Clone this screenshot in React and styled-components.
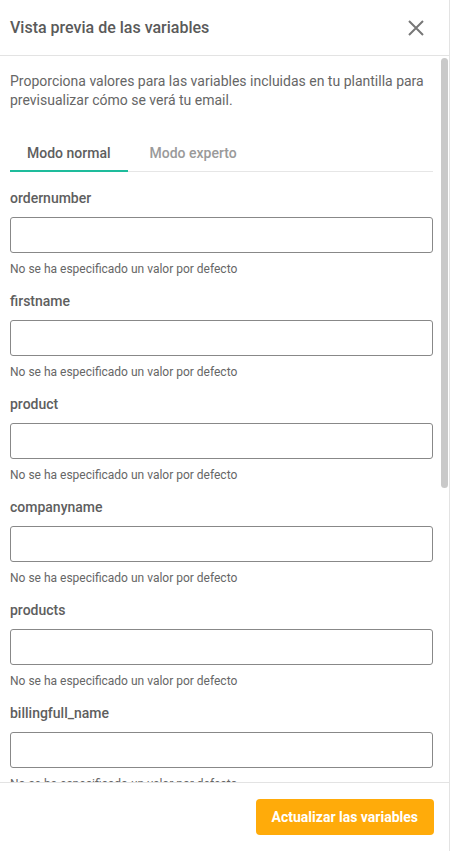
import { useEffect, useRef, useState } from "react";
import styled, { createGlobalStyle } from "styled-components";

const GlobalStyle = createGlobalStyle`
  html, body {
    margin: 0;
    padding: 0;
    background: #fff;
  }
  * {
    box-sizing: border-box;
  }
  body {
    font-family: Roboto, "Liberation Sans", Arial, sans-serif;
  }
`;

const Panel = styled.div`
  display: flex;
  flex-direction: column;
  width: 450px;
  height: 851px;
  border-right: 1px solid #e3e3e3;
  background: #fff;
`;

const Header = styled.div`
  display: flex;
  align-items: center;
  justify-content: space-between;
  height: 56px;
  flex-shrink: 0;
  padding: 0 25px 0 10px;
  border-bottom: 1px solid #e3e3e3;
`;

const Title = styled.h2`
  margin: 0;
  font-size: 16px;
  font-weight: 500;
  color: #5a5a5a;
`;

const CloseButton = styled.button`
  display: flex;
  padding: 0;
  border: none;
  background: none;
  cursor: pointer;
`;

const BodyRow = styled.div`
  display: flex;
  flex: 1;
  min-height: 0;
`;

const Body = styled.div`
  flex: 1;
  overflow-y: auto;
  padding: 16px 7px 72px 10px;
  scrollbar-width: none;

  &::-webkit-scrollbar {
    display: none;
  }
`;

const ScrollTrack = styled.div`
  width: 9px;
  flex-shrink: 0;
  padding: 2px 1px 2px 1px;
`;

const ScrollThumb = styled.div`
  width: 7px;
  border-radius: 4px;
  background: #c9c9c9;
`;

const Description = styled.p`
  margin: 0;
  font-size: 14px;
  line-height: 19px;
  color: #666;
`;

const TabList = styled.div`
  display: flex;
  gap: 5px;
  margin-top: 22px;
  border-bottom: 1px solid #e6e6e6;
`;

const Tab = styled.button`
  padding: 12px 17px 7px;
  margin-bottom: -1px;
  border: none;
  border-bottom: 2px solid ${(p) => (p.$active ? "#1ebc9c" : "transparent")};
  background: none;
  font-family: inherit;
  font-size: 14px;
  line-height: 19px;
  font-weight: 500;
  color: ${(p) => (p.$active ? "#5e5e5e" : "#9a9a9a")};
  cursor: pointer;
`;

const Fields = styled.div`
  display: flex;
  flex-direction: column;
  gap: 15px;
  padding-top: 17px;
`;

const Field = styled.div`
  display: flex;
  flex-direction: column;
`;

const Label = styled.label`
  font-size: 14px;
  line-height: 19px;
  font-weight: 500;
  color: #5e5e5e;
`;

const Input = styled.input`
  margin-top: 9px;
  width: 100%;
  height: 36px;
  padding: 0 10px;
  border: 1px solid #888;
  border-radius: 3px;
  font-family: inherit;
  font-size: 14px;
  color: #333;
  outline: none;
`;

const Hint = styled.span`
  margin-top: 8px;
  font-size: 12px;
  line-height: 16px;
  color: #666;
`;

const Footer = styled.div`
  display: flex;
  justify-content: flex-end;
  flex-shrink: 0;
  height: 69px;
  padding: 16px 15px 16px 0;
  border-top: 1px solid #e3e3e3;
`;

const SubmitButton = styled.button`
  height: 36px;
  padding: 0 16px;
  border: none;
  border-radius: 4px;
  background: #ffab0a;
  color: #fff;
  font-family: inherit;
  font-size: 14px;
  font-weight: 700;
  cursor: pointer;
`;

const variables = [
  "ordernumber",
  "firstname",
  "product",
  "companyname",
  "products",
  "billingfull_name",
  "billingaddress",
  "shippingaddress",
  "ordertotal",
  "orderdate",
];

function CloseIcon() {
  return (
    <svg width="16" height="16" viewBox="0 0 16 16">
      <path d="M1 1 L15 15 M15 1 L1 15" stroke="#777" strokeWidth="2" fill="none" />
    </svg>
  );
}

export default function App() {
  const [tab, setTab] = useState("normal");
  const [values, setValues] = useState({});
  const [thumb, setThumb] = useState({ top: 0, height: 0 });
  const bodyRef = useRef(null);

  const updateThumb = () => {
    const el = bodyRef.current;
    if (!el) return;
    const track = el.clientHeight - 4;
    const height = (el.clientHeight / el.scrollHeight) * track;
    const top = (el.scrollTop / el.scrollHeight) * track;
    setThumb({ top, height });
  };

  useEffect(() => {
    updateThumb();
    window.addEventListener("resize", updateThumb);
    return () => window.removeEventListener("resize", updateThumb);
  }, []);

  const handleChange = (e) => {
    const { name, value } = e.target;
    setValues((v) => ({ ...v, [name]: value }));
  };

  return (
    <>
      <GlobalStyle />
      <Panel>
        <Header>
          <Title>Vista previa de las variables</Title>
          <CloseButton aria-label="Cerrar">
            <CloseIcon />
          </CloseButton>
        </Header>
        <BodyRow>
          <Body ref={bodyRef} onScroll={updateThumb}>
            <Description>
              Proporciona valores para las variables incluidas en tu plantilla para
              previsualizar cómo se verá tu email.
            </Description>
            <TabList>
              <Tab $active={tab === "normal"} onClick={() => setTab("normal")}>
                Modo normal
              </Tab>
              <Tab $active={tab === "expert"} onClick={() => setTab("expert")}>
                Modo experto
              </Tab>
            </TabList>
            <Fields>
              {variables.map((name) => (
                <Field key={name}>
                  <Label htmlFor={name}>{name}</Label>
                  <Input
                    id={name}
                    name={name}
                    value={values[name] || ""}
                    onChange={handleChange}
                  />
                  <Hint>No se ha especificado un valor por defecto</Hint>
                </Field>
              ))}
            </Fields>
          </Body>
          <ScrollTrack>
            <ScrollThumb style={{ marginTop: thumb.top, height: thumb.height }} />
          </ScrollTrack>
        </BodyRow>
        <Footer>
          <SubmitButton>Actualizar las variables</SubmitButton>
        </Footer>
      </Panel>
    </>
  );
}
